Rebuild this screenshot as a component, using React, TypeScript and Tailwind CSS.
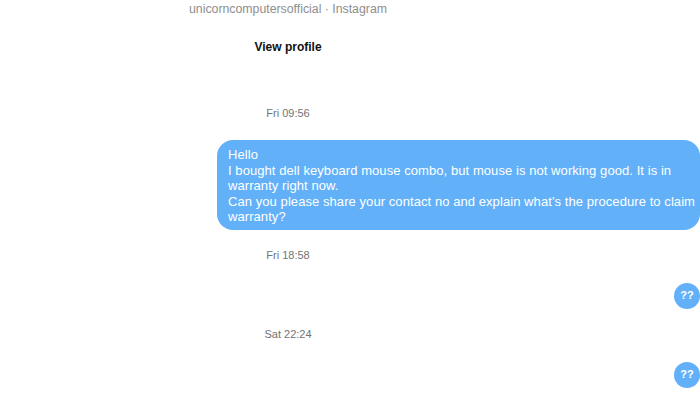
export default function App() {
  return (
    <div className="w-[700px] h-[400px] overflow-hidden bg-white font-['Liberation_Sans',Arial,sans-serif]">
      {/* Profile header */}
      <div className="ml-[189px] w-[198px] pt-[1px]">
        <div className="text-[12.3px] leading-4 text-[#8e8e8e] whitespace-nowrap">
          unicorncomputersofficial · Instagram
        </div>
        <div className="mt-[22px] text-center text-[12px] leading-4 font-bold text-[#111]">
          View profile
        </div>
      </div>

      {/* Thread */}
      <div className="flex flex-col">
        <div className="ml-[188px] w-[200px] mt-[51px] text-center text-[11px] leading-[14px] text-[#737373]">
          Fri 09:56
        </div>

        <div className="mt-[20px] flex justify-end">
          <div className="w-[483px] rounded-[16px] bg-[#62b1f8] pl-[11px] pr-[4px] pt-[7px] pb-[5px] text-[13px] leading-[15.5px] tracking-[0.07px] text-white">
            <p>Hello</p>
            <p>I bought dell keyboard mouse combo, but mouse is not working good. It is in warranty right now.</p>
            <p>Can you please share your contact no and explain what’s the procedure to claim warranty?</p>
          </div>
        </div>

        <div className="ml-[188px] w-[200px] mt-[18px] text-center text-[11px] leading-[14px] text-[#737373]">
          Fri 18:58
        </div>

        <div className="mt-[21px] flex justify-end">
          <div className="h-[26px] w-[26px] rounded-full bg-[#62b1f8] flex items-center justify-center text-[11px] font-bold text-white">
            ??
          </div>
        </div>

        <div className="ml-[188px] w-[200px] mt-[18px] text-center text-[11px] leading-[14px] text-[#737373]">
          Sat 22:24
        </div>

        <div className="mt-[21px] flex justify-end">
          <div className="h-[26px] w-[26px] rounded-full bg-[#62b1f8] flex items-center justify-center text-[11px] font-bold text-white">
            ??
          </div>
        </div>
      </div>
    </div>
  );
}
